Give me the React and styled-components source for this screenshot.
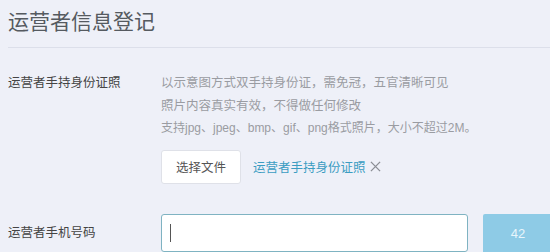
import React from "react";
import styled, { createGlobalStyle } from "styled-components";

const Global = createGlobalStyle`
  html, body { margin: 0; padding: 0; background: #eef0f8; }
  body { font-family: "Liberation Sans", "Noto Sans CJK SC", sans-serif; overflow: hidden; }
`;

const Page = styled.div`
  width: 550px;
  height: 252px;
  overflow: hidden;
  padding: 0 0 0 8px;
  box-sizing: border-box;
`;

const Title = styled.h1`
  margin: 0 0 24px;
  padding-top: 5px;
  height: 48px;
  box-sizing: border-box;
  font-family: "Noto Sans CJK SC", sans-serif;
  font-size: 21px;
  line-height: 30px;
  font-weight: 400;
  color: #555a60;
  border-bottom: 1px solid #dcdfea;
`;

const Row = styled.div`
  display: grid;
  grid-template-columns: 153px 1fr;
  align-items: start;
  margin-bottom: ${(p) => p.$mb || 0}px;
`;

const Label = styled.div`
  font-size: 12.5px;
  line-height: 22px;
  color: #444;
  padding-top: ${(p) => p.$pt || 0}px;
`;

const Desc = styled.div`
  font-size: ${(p) => p.$size || 12.5}px;
  line-height: 22.5px;
  color: #9a9ca2;
  white-space: nowrap;
`;

const UploadLine = styled.div`
  display: flex;
  align-items: center;
  margin-top: 10px;
  gap: 12px;
`;

const FileButton = styled.button`
  width: 80px;
  height: 34px;
  background: #fff;
  border: 1px solid #dfe1e8;
  border-radius: 3px;
  font-family: inherit;
  font-size: 12.5px;
  color: #555;
  padding: 0;
`;

const FileLink = styled.span`
  font-size: 12.5px;
  color: #3b9dc2;
  display: flex;
  align-items: center;
  gap: 4px;
`;

const Close = styled.svg`
  width: 11px;
  height: 11px;
`;

const InputLine = styled.div`
  display: flex;
  align-items: flex-start;
  gap: 15px;
`;

const Input = styled.div`
  width: 307px;
  height: 38px;
  box-sizing: border-box;
  background: #fff;
  border: 1px solid #7fb3c2;
  border-radius: 3px;
  display: flex;
  align-items: center;
  padding-left: 8px;
`;

const Caret = styled.span`
  width: 1px;
  height: 18px;
  background: #555;
`;

const CodeButton = styled.div`
  width: 70px;
  height: 40px;
  background: #8ecbe6;
  color: #e8f6fc;
  font-size: 13px;
  display: flex;
  align-items: center;
  justify-content: center;
  border-radius: 2px 0 0 0;
`;

export default function App() {
  return (
    <>
      <Global />
      <Page>
        <Title>运营者信息登记</Title>
        <Row $mb={30}>
          <Label>运营者手持身份证照</Label>
          <div>
            <Desc>以示意图方式双手持身份证，需免冠，五官清晰可见</Desc>
            <Desc>照片内容真实有效，不得做任何修改</Desc>
            <Desc $size={12}>支持jpg、jpeg、bmp、gif、png格式照片，大小不超过2M。</Desc>
            <UploadLine>
              <FileButton>选择文件</FileButton>
              <FileLink>
                运营者手持身份证照
                <Close viewBox="0 0 12 12">
                  <path d="M1 1L11 11M11 1L1 11" stroke="#8a8d94" strokeWidth="1.4" fill="none" />
                </Close>
              </FileLink>
            </UploadLine>
          </div>
        </Row>
        <Row>
          <Label $pt={8}>运营者手机号码</Label>
          <InputLine>
            <Input>
              <Caret />
            </Input>
            <CodeButton>42</CodeButton>
          </InputLine>
        </Row>
      </Page>
    </>
  );
}
